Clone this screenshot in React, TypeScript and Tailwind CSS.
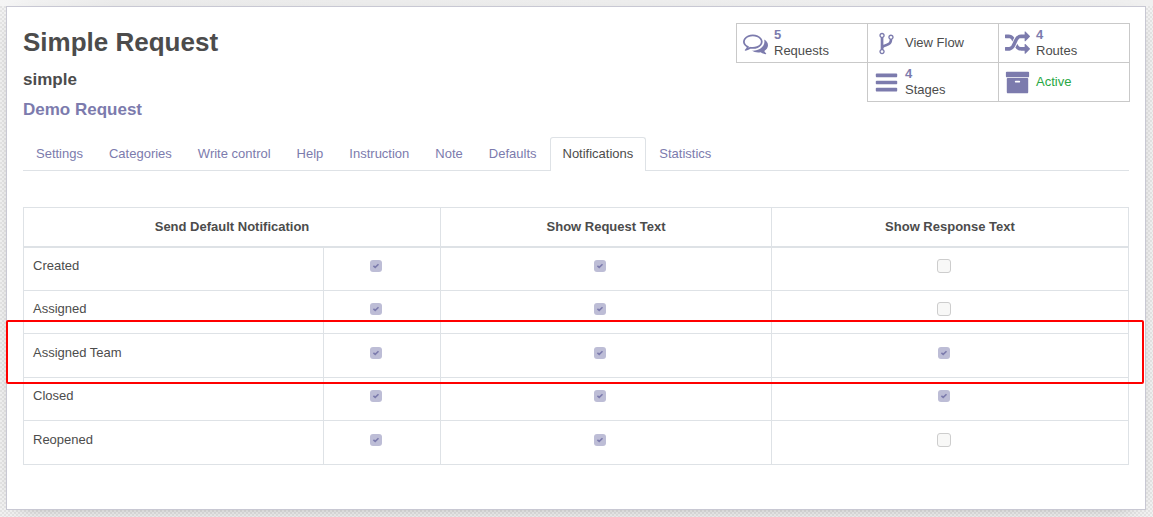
import React from "react";

const ICONS = {
  comments:
    "M704 384q-153 0-286 52t-211.500 141-78.500 191q0 82 53 158t149 132l97 56-35 84q34-20 62-39l44-31 53 10q78 14 153 14 153 0 286-52t211.500-141 78.500-191-78.500-191-211.500-141-286-52zm0-128q191 0 353.500 68.500t256.500 186.500 94 257-94 257-256.500 186.500-353.500 68.500q-86 0-176-16-124 88-278 128-36 9-86 16h-3q-11 0-20.500-8t-11.500-21q-1-3-1-6.500t.5-6.500 2-6l2.500-5 3.500-5.500 4-5 4.500-5 4-4.500q5-6 23-25t26-29.500 22.500-29 25-38.500 20.500-44q-124-72-195-177t-71-224q0-139 94-257t256.500-186.500 353.500-68.500zm822 1169q10 24 20.500 44t25 38.500 22.500 29 26 29.500 23 25q1 1 4 4.500t4.500 5 4 5 3.500 5.500l2.500 5 2 6 .5 6.500-1 6.500q-3 14-13 22t-22 7q-50-7-86-16-154-40-278-128-90 16-176 16-271 0-472-132 58 4 88 4 161 0 309-45t264-129q125-92 192-212t67-254q0-77-23-152 129 71 204 178t75 230q0 120-71 224.500t-195 176.500z",
  fork:
    "M672 1472q0-40-28-68t-68-28-68 28-28 68 28 68 68 28 68-28 28-68zm0-1152q0-40-28-68t-68-28-68 28-28 68 28 68 68 28 68-28 28-68zm640 128q0-40-28-68t-68-28-68 28-28 68 28 68 68 28 68-28 28-68zm96 0q0 52-26 96.500t-70 69.500q-2 287-226 414-67 38-203 81-128 40-169.500 71t-41.500 100v26q44 25 70 69.500t26 96.500q0 80-56 136t-136 56-136-56-56-136q0-52 26-96.500t70-69.500v-820q-44-25-70-69.500t-26-96.500q0-80 56-136t136-56 136 56 56 136q0 52-26 96.500t-70 69.500v497q54-26 154-57 55-17 87.500-29.500t70.500-31 59-39.500 40.500-51 28-69.500 8.500-91.500q-44-25-70-69.500t-26-96.500q0-80 56-136t136-56 136 56 56 136z",
  random:
    "M666 481q-60 92-137 273-22-45-37-72.500t-40.500-63.500-51-56.500-63-35-81.500-14.500h-224q-14 0-23-9t-9-23v-192q0-14 9-23t23-9h224q250 0 410 225zm1126 799q0 14-9 23l-320 320q-9 9-23 9-13 0-22.500-9.500t-9.500-22.500v-192q-32 0-85 .5t-81 1-73-1-71-5-64-10.500-63-18.500-58-28.500-59-40-55-53.500-56-69.500q59-93 136-273 22 45 37 72.500t40.500 63.500 51 56.500 63 35 81.500 14.500h256v-192q0-14 9-23t23-9q12 0 24 10l319 319q9 9 9 23zm0-896q0 14-9 23l-320 320q-9 9-23 9-13 0-22.500-9.500t-9.500-22.500v-192h-256q-48 0-87 15t-69 45-51 61.500-45 77.500q-32 62-78 171-29 66-49.500 111t-54 105-64 100-74 83-90 68.500-106.500 42-128 16.500h-224q-14 0-23-9t-9-23v-192q0-14 9-23t23-9h224q48 0 87-15t69-45 51-61.500 45-77.500q32-62 78-171 29-66 49.500-111t54-105 64-100 74-83 90-68.500 106.500-42 128-16.500h256v-192q0-14 9-23t23-9q12 0 24 10l319 319q9 9 9 23z",
  bars:
    "M1664 1344v128q0 26-19 45t-45 19h-1408q-26 0-45-19t-19-45v-128q0-26 19-45t45-19h1408q26 0 45 19t19 45zm0-512v128q0 26-19 45t-45 19h-1408q-26 0-45-19t-19-45v-128q0-26 19-45t45-19h1408q26 0 45 19t19 45zm0-512v128q0 26-19 45t-45 19h-1408q-26 0-45-19t-19-45v-128q0-26 19-45t45-19h1408q26 0 45 19t19 45z",
  archive:
    "M1088 832q0-26-19-45t-45-19h-256q-26 0-45 19t-19 45 19 45 45 19h256q26 0 45-19t19-45zm576-192v960q0 26-19 45t-45 19h-1408q-26 0-45-19t-19-45v-960q0-26 19-45t45-19h1408q26 0 45 19t19 45zm64-448v256q0 26-19 45t-45 19h-1536q-26 0-45-19t-19-45v-256q0-26 19-45t45-19h1536q26 0 45 19t19 45z",
};

type IconName = keyof typeof ICONS;

function StatButton({
  icon,
  value,
  label,
  active = false,
}: {
  icon: IconName;
  value?: number;
  label: string;
  active?: boolean;
}) {
  return (
    <button
      type="button"
      className="-mb-px -ml-px flex h-10 w-[132px] items-center gap-1.5 border border-[#c9c9c9] bg-white pl-1.5 text-left"
    >
      <svg
        viewBox="0 0 1792 1792"
        aria-hidden="true"
        className="size-[25px] shrink-0 fill-[#7c7bad]"
      >
        <path d={ICONS[icon]} />
      </svg>
      <span className="flex flex-col leading-4">
        {value !== undefined && (
          <span className="font-bold text-[#7c7bad]">{value}</span>
        )}
        <span className={active ? "text-[#28a745]" : "text-[#4c4c4c]"}>
          {label}
        </span>
      </span>
    </button>
  );
}

const TABS = [
  "Settings",
  "Categories",
  "Write control",
  "Help",
  "Instruction",
  "Note",
  "Defaults",
  "Notifications",
  "Statistics",
];

const ROWS = [
  { name: "Created", checks: [true, true, false] },
  { name: "Assigned", checks: [true, true, false] },
  { name: "Assigned Team", checks: [true, true, true] },
  { name: "Closed", checks: [true, true, true] },
  { name: "Reopened", checks: [true, true, false] },
];

const COLUMNS = [
  "Send Default Notification",
  "Show Request Text",
  "Show Response Text",
];

function Check({ checked, label }: { checked: boolean; label: string }) {
  return (
    <label className="relative mx-auto flex size-3.5 items-center justify-center">
      <input
        type="checkbox"
        defaultChecked={checked}
        disabled
        aria-label={label}
        className="size-3.5 appearance-none rounded-[3px] border border-[#cdcdcd] bg-[#f8f8f7] checked:size-3 checked:border-0 checked:bg-[#bdbdd6]"
      />
      {checked && (
        <svg
          viewBox="0 0 12 12"
          aria-hidden="true"
          className="pointer-events-none absolute size-3"
        >
          <path
            d="M3.4 5.9 5.2 7.4 8.5 4.2"
            fill="none"
            stroke="#7c7bad"
            strokeWidth="1.6"
          />
        </svg>
      )}
    </label>
  );
}

export default function App() {
  return (
    <div className="min-h-screen bg-[conic-gradient(#e4e4e4_25%,#f2f2f2_0_50%,#e4e4e4_0_75%,#f2f2f2_0)] bg-[length:4px_4px] font-['Liberation_Sans',Arial,sans-serif] text-[13px] text-[#4c4c4c]">
      <div className="h-1.5 bg-linear-to-r from-[#f5f5f5] via-[#ececec] via-10% to-[#f0f0f0]" />
      <main className="mr-[7px] ml-1.5 border border-[#c8c8d3] bg-white px-4 pt-4 pb-11 shadow-[0_5px_20px_-15px_rgba(0,0,0,0.7)]">
        <header className="flex items-start justify-between">
          <div className="font-bold">
            <h1 className="text-[26px] leading-[39px]">Simple Request</h1>
            <h2 className="mt-1.5 text-[17px] leading-6">simple</h2>
            <h2 className="mt-1.5 text-[17px] leading-6">
              <a href="#request-type" className="text-[#7c7bad]">
                Demo Request
              </a>
            </h2>
          </div>
          <div className="-mr-px flex w-[396px] flex-wrap justify-end pb-px pl-px">
            <StatButton icon="comments" value={5} label="Requests" />
            <StatButton icon="fork" label="View Flow" />
            <StatButton icon="random" value={4} label="Routes" />
            <StatButton icon="bars" value={4} label="Stages" />
            <StatButton icon="archive" label="Active" active />
          </div>
        </header>

        <nav className="mt-[15px] flex border-b border-[#dee2e6]">
          {TABS.map((tab) => (
            <a
              key={tab}
              href={"#" + tab.toLowerCase().replace(" ", "-")}
              className={
                tab === "Notifications"
                  ? "-mb-px h-[34px] rounded-t-[3px] border border-b-0 border-[#dee2e6] bg-white px-3 leading-8 text-[#4c4c4c]"
                  : "h-[33px] border border-b-0 border-transparent px-3 leading-8 text-[#7c7bad]"
              }
            >
              {tab}
            </a>
          ))}
        </nav>

        <section className="relative mt-9">
          <table className="w-full table-fixed border-collapse border border-[#dee2e6]">
            <colgroup>
              <col className="w-[300px]" />
              <col className="w-[117px]" />
              <col className="w-[331px]" />
              <col />
            </colgroup>
            <thead>
              <tr className="h-[39px] border-b-2 border-[#dee2e6]">
                {COLUMNS.map((column, i) => (
                  <th
                    key={column}
                    scope="col"
                    colSpan={i === 0 ? 2 : 1}
                    className="border-x border-[#dee2e6] text-center font-bold"
                  >
                    {column}
                  </th>
                ))}
              </tr>
            </thead>
            <tbody>
              {ROWS.map((row) => (
                <tr
                  key={row.name}
                  className="border-b border-[#dee2e6] odd:h-11 even:h-[43px]"
                >
                  <th
                    scope="row"
                    className="border-x border-[#dee2e6] pb-1.5 pl-[9px] text-left font-normal"
                  >
                    {row.name}
                  </th>
                  {row.checks.map((checked, i) => (
                    <td
                      key={COLUMNS[i]}
                      className="border-x border-[#dee2e6] pr-3 pb-1.5"
                    >
                      <Check
                        checked={checked}
                        label={row.name + ": " + COLUMNS[i]}
                      />
                    </td>
                  ))}
                </tr>
              ))}
            </tbody>
          </table>
          <div className="pointer-events-none absolute top-[113px] -right-[15px] -left-[17px] h-16 rounded-[2px] border-2 border-[#ff0000]" />
        </section>
      </main>
    </div>
  );
}
